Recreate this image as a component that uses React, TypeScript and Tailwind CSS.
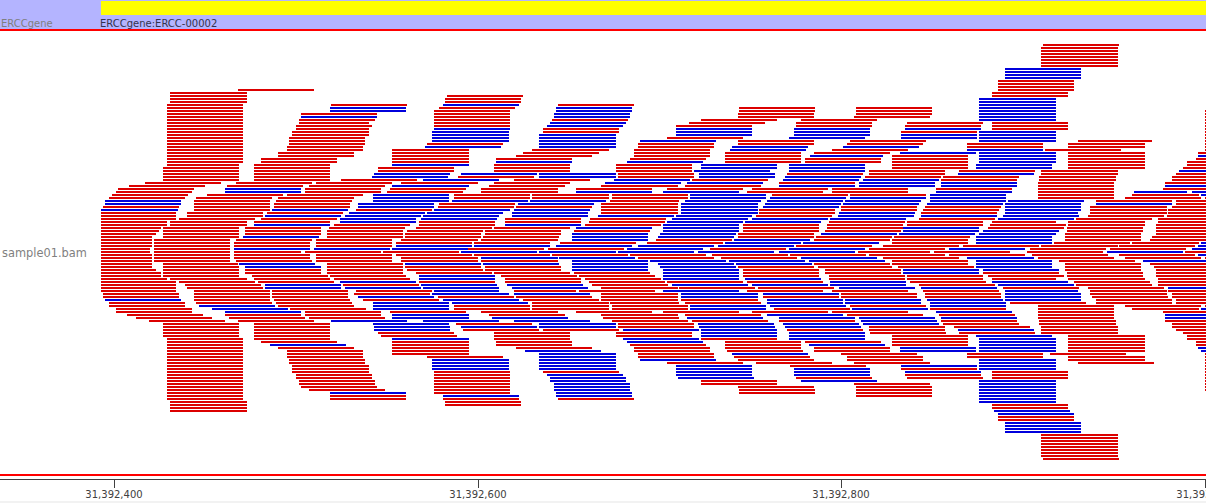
const RED = "#dc0000";
const BLUE = "#0000dc";
const READ_WIDTH = 76;
// these stacks are one pixel longer
const WIDE = new Set([170, 292, 392, 401, 432, 481, 532, 539, 601, 681, 979, 1039, 1041, 1068, 1090]);

// one string per pileup row, 3px apart. "b" = reverse strand, "a-b" = read with its own end
const ROWS = [
  "1043",
  "1041", "1041", "1041", "1041", "1041", "1041", "1041",
  "b1005", "b1005", "b1005", "b1005",
  "998", "998", "998",
  "238 998",
  "170 992",
  "170 447 992",
  "170 445 b979",
  "170 445 b979",
  "167 331 b443 558 b979",
  "167 b330 439 b556 739 856 b979",
  "167 b330 434 b556 739 856 b979 1205",
  "167 301 434 b554 738 856 b979 1205",
  "167 b301 434 b554 738 854 b979 1205",
  "167 299 434 552 701 801 b979 1205",
  "167 299-369 434 b550 689 796 907 992 1205",
  "167 296 434 b547 676 796 905 992 1205",
  "167 296-369 b434 543 b676 b794 b905 992 1205",
  "167 292 b432 543 b676 b794 901 b979 1205",
  "167 292 b432 b539 b676 b794 b901 b979 1205",
  "167 289 b432 b539 667 b789 b901 b979 1205",
  "167 289 b432 b539 b640 738 850 b979 1078-1152 1205",
  "167 289 427 b539 638 738 847 967 1068 1205",
  "167 287 b425 b539 638 b732 b843 967 1068 1205",
  "167 287 392 532 634 b730 832 b967 1045 1205",
  "167 278 392 523 634 725 814 b900 b979 1068 1198",
  "167 278 392 516 634 725 b810-883 892 b979 1068 b1198",
  "167 261 392 496 630 725 805 892 b979 1068 1196",
  "167 261 392 b496 b627 725 805 892 b979 1068 1187",
  "167-239 254 b392 494 616 b701 b789 892 b976 1068 1187",
  "163 254 378 494 616 b701 b789 892 b976 1068 1183",
  "163 254 378 494 616 b694 b789 869 959 1041 b1179",
  "163 254 b374 b461 b539 618 b699 787 869 b958 1041 1176",
  "163 254 b372 458 b539 618 b699 b785 865 943 1039 1172",
  "163 254 341 b423 514 b614 692 b783 b863 941 1039 1172",
  "145 236 316 401 494 b605 b687 779 b859 b941 1038 1165",
  "129 227 309 b392 489 601 685 b779 b859 b941 1038 b1165",
  "118 b225 305 390 481 576 667 752 832 936 1038 1163",
  "116 b225 305 387 481 b576 b663 747 832 b936 1038 b1134-1187 b1192",
  "112 207 287 b373 454 532 612 b690 772 850 b930 1038 1132-1199 b1201",
  "109 196 278 b373 454 532 612 b690 b770 b850 b930 1038 1125 1205",
  "b105 194 276 b373 b452 b530 610-679 b685 b767 b845 b930 b1008 1096 1176",
  "b105 194 274 b358 439 b518 601 b681 b765 b843 b927 b1005 b1096 1176",
  "103 194 274 b358 438 516 601 b681 b763 841 925 b1005 1090 1172",
  "b101-178 194 b272 356 b434 b514 601 b681 759 841 923 b1005 1090 1168",
  "101-176 187 267 b349 b427 b512 601 b681 759 b839 921 b1005-1078 1090 1168",
  "101-176 187 b265 b345 b423 b512 b598 b676 756 b838 b921 b1003 1088 1167",
  "101-176 179 261 b340 b421 505 590 b672 b752 b830 919 b998 1076 1158",
  "101-167 170 254 b340 419 505 589 b667 b745 829 907 992-1056 1068 1158",
  "101-167 170 b254 334 419 b505 585 b663 743 827 907 990 1068 1156",
  "101-161 163 245 329 416 494 b576 b663 743 827 b903 988 1067 1156",
  "101-159 163 245 327 407 485 574 b663 743 825 b903 b983 1067 1156",
  "101-156 163 245 327 405 485 b572 b660 738 b821 b899 b979 1065 1156",
  "101-152 163 b243 327 405 483 b572 b658 738 816 894 b976 1065 1152",
  "101-152 154 236 316 401 481 b572 656 b734 814 892 b976 1065 1150",
  "101-152 154 234 316 396 474 560 647 b725 b803 892 b976 1054 1132-1199 b1201",
  "101-152 154 234 316 b396 b474 b556 b638 b718 796 883 963 1041 1119 b1198",
  "101-150 154 b234 b314 b392 468 548 b627 710 b789 869 b949 1030 1110 b1192",
  "101-150 154 234-301 305 383 b461 b539 b618 b698 b779 858-930 934 1027 b1107 1185",
  "101-152 154 234 316 396 474 552 630 712 790 869 949 1032 1119 b1198",
  "101-152 154 234 316 401 b481 b559 638 721 b801 883 b967-1034 1038 1125 1205",
  "101-152 154 236 316 401 481 b572 b650 b729 b809 892 b976 1059 b1143",
  "101-152 163-238 b239 327 b405 b483 b572 b658 b736 814 892 b976 1065 1150",
  "101-152 163 b245 327 405 485 b572 b660 738 818-892 898 b976 1065 1154",
  "101-156 163 245 327 407 485 b572 b663 743 825 b903 b983 1065 1156",
  "101-161 163 245 327 416 494 574 b663 743 825 b903 983 1067 1156",
  "101-161 163 252 330 b419 501 579 b663 743 829 907 988 1067 1156",
  "101-167 170 254 334 b419 505 585 b663 b745 829 907 992-1056 1068 1158",
  "101-176 179 258 b340 419 505 589 667 747 b830 910 b992 1074 1158",
  "101-176 185 b265 343 b421 b507 592 b672 b752 b830 919 b998 1076 1158",
  "101-176 187 b265 b345 b423 b512 601 679 758 b839 b921 1003 1088 b1168",
  "101-176 194 272 356 b434-499 514-576 579 b663 747 832 923 b1005-1078 1090 1168",
  "103 194 272 354 b432 b514 601 b681 b763 841 925 b1005 1090 1172",
  "103 194 272 b358 438 516 601 b681 763 841 925 b1005 1092 1172",
  "b105 194 274 363 b443 523 601 681 b767 b845 b927 b1005 1096 1176",
  "109 196 276 b373 b452 532 610-679 685 b767 b845 b930 1010 1096 1176",
  "109 b199 278 b373 454 532 612 b690 b770 850 b930 1038 1125 1205",
  "116 b212 290 b373 454 532 612 b690 774 b852 930 1038 1132-1199 b1201",
  "116 b225 305 390 481 576 663 752 832 b936 1038 1163",
  "127 225 305 b392 489 601 685 b767 847 939 1038 b1165",
  "136 229 309 b392 b492 603 b687 b779 b859 b941 1038 b1165",
  "149 238 b331 b423 b514 612 692 779 b861 941 1039 1165",
  "163 254 b373 456 b539 618 b698 b783 b863 943 1039 1172",
  "163 254 b374 b461 b539 618 b699 b785 869 954 1041 1172",
  "163 254 b374 463 543 b623 b701 787 869 b958 1041 1176",
  "163 254 378 494 616 b701 b789 870 959 1041 1183",
  "163 254 381 494 616 b701 b789 892 b976 1068 1187",
  "167 254 b392 494 b623 701 b789 892 b979 1068 1187",
  "167 261 392 496 b627 725 805 892 b979 1068 1196",
  "167 b270 392 496 630 725 b809 892 b979 1068 1196",
  "167 278 392 516 634 725 814 b900 b979 1068 b1198",
  "167 287 392 b525 634 727 814 b900 b979 1068 b1201",
  "167 287 392 b539 638 b732 841 967 1050 1205",
  "167 287 427 b539 638 734 847 967 1068 1205",
  "167 289 b432 b539 b640 738 847 b979 1068 1205",
  "167 289 b432 b539 667 756 854 b979 1078 1205",
  "167 292 b432 b539 b676 790 b901 b979 1205",
  "167 292 b432 b539 b676 b794 901 b979 1205",
  "167 292 434 543 b676 b794 b905 992 1205",
  "167 296 434 b547 b676 b794 905 992 1205",
  "167 296 434 b550 b678 796 907 992 1205",
  "167 299 434 b550 701 b801 b979 1205",
  "167 299 434 b554 701 854 b979 1205",
  "167 301 434 b554 738 856 b979 1205",
  "167 309 434 b554 739 856 b979 1205",
  "167 b330 434 b556 739 856 b979",
  "167 330 b443 b556 856 b979",
  "167 330 443 558 b979",
  "170 445 b979",
  "170 445 992",
  "170 992",
  "170 b994",
  "b998", "998", "998",
  "b1005", "b1005", "b1005", "b1005",
  "1041", "1041", "1041", "1041", "1041", "1041", "1041", "1041",
  "1043",
];

const TICKS = [
  { x: 114, label: "31,392,400" },
  { x: 478, label: "31,392,600" },
  { x: 841, label: "31,392,800" },
  { x: 1205, label: "31,393,000" },
];

function Pileup() {
  return (
    <svg width={1105} height={443} viewBox="101 31 1105 443" className="block">
      {ROWS.map((row, i) =>
        row.split(" ").map((token) => {
          const blue = token.startsWith("b");
          const [start, end] = token.replace("b", "").split("-").map(Number);
          const width = end ? end - start : WIDE.has(start) ? READ_WIDTH + 1 : READ_WIDTH;
          return (
            <rect
              key={i + token}
              x={start}
              y={44 + i * 3}
              width={width}
              height={2}
              fill={blue ? BLUE : RED}
            />
          );
        })
      )}
    </svg>
  );
}

export default function App() {
  return (
    <div className="w-[1206px] h-[503px] flex flex-col overflow-hidden bg-white font-['DejaVu_Sans',sans-serif]">
      {/* gene track */}
      <div className="flex h-[31px] shrink-0 bg-[#b4b4ff] border-b-2 border-[#ff0000]">
        <div className="w-[101px] pt-[17px] pl-[1px] text-[10px] leading-[13px] text-[#7f7f7f]">ERCCgene</div>
        <div className="flex-1 pt-[1px]">
          <div className="h-[14px] bg-[#ffff00]" />
          <div className="pt-[2px] -ml-[1px] text-[10px] leading-[13px] text-[#33334d]">ERCCgene:ERCC-00002</div>
        </div>
      </div>

      {/* alignment track */}
      <div className="flex h-[443px] shrink-0">
        <div className="w-[101px] flex items-center pl-[2px] pt-[2px] text-[11.4px] whitespace-nowrap text-[#7f7f7f]">sample01.bam</div>
        <Pileup />
      </div>

      <div className="h-[2px] shrink-0 bg-[#ff0000]" />

      {/* coordinate ruler */}
      <svg width={1206} height={25} viewBox="0 476 1206 25" className="block shrink-0">
        <rect x={0} y={479} width={1206} height={1} fill="#404040" />
        {TICKS.map((t) => (
          <g key={t.x}>
            <rect x={t.x} y={480} width={1} height={8} fill="#404040" />
            <text x={t.x} y={498} textAnchor="middle" fontSize={10} fill="#404040">
              {t.label}
            </text>
          </g>
        ))}
      </svg>
      <div className="h-[2px] shrink-0 bg-[#f2f2f2]" />
    </div>
  );
}
